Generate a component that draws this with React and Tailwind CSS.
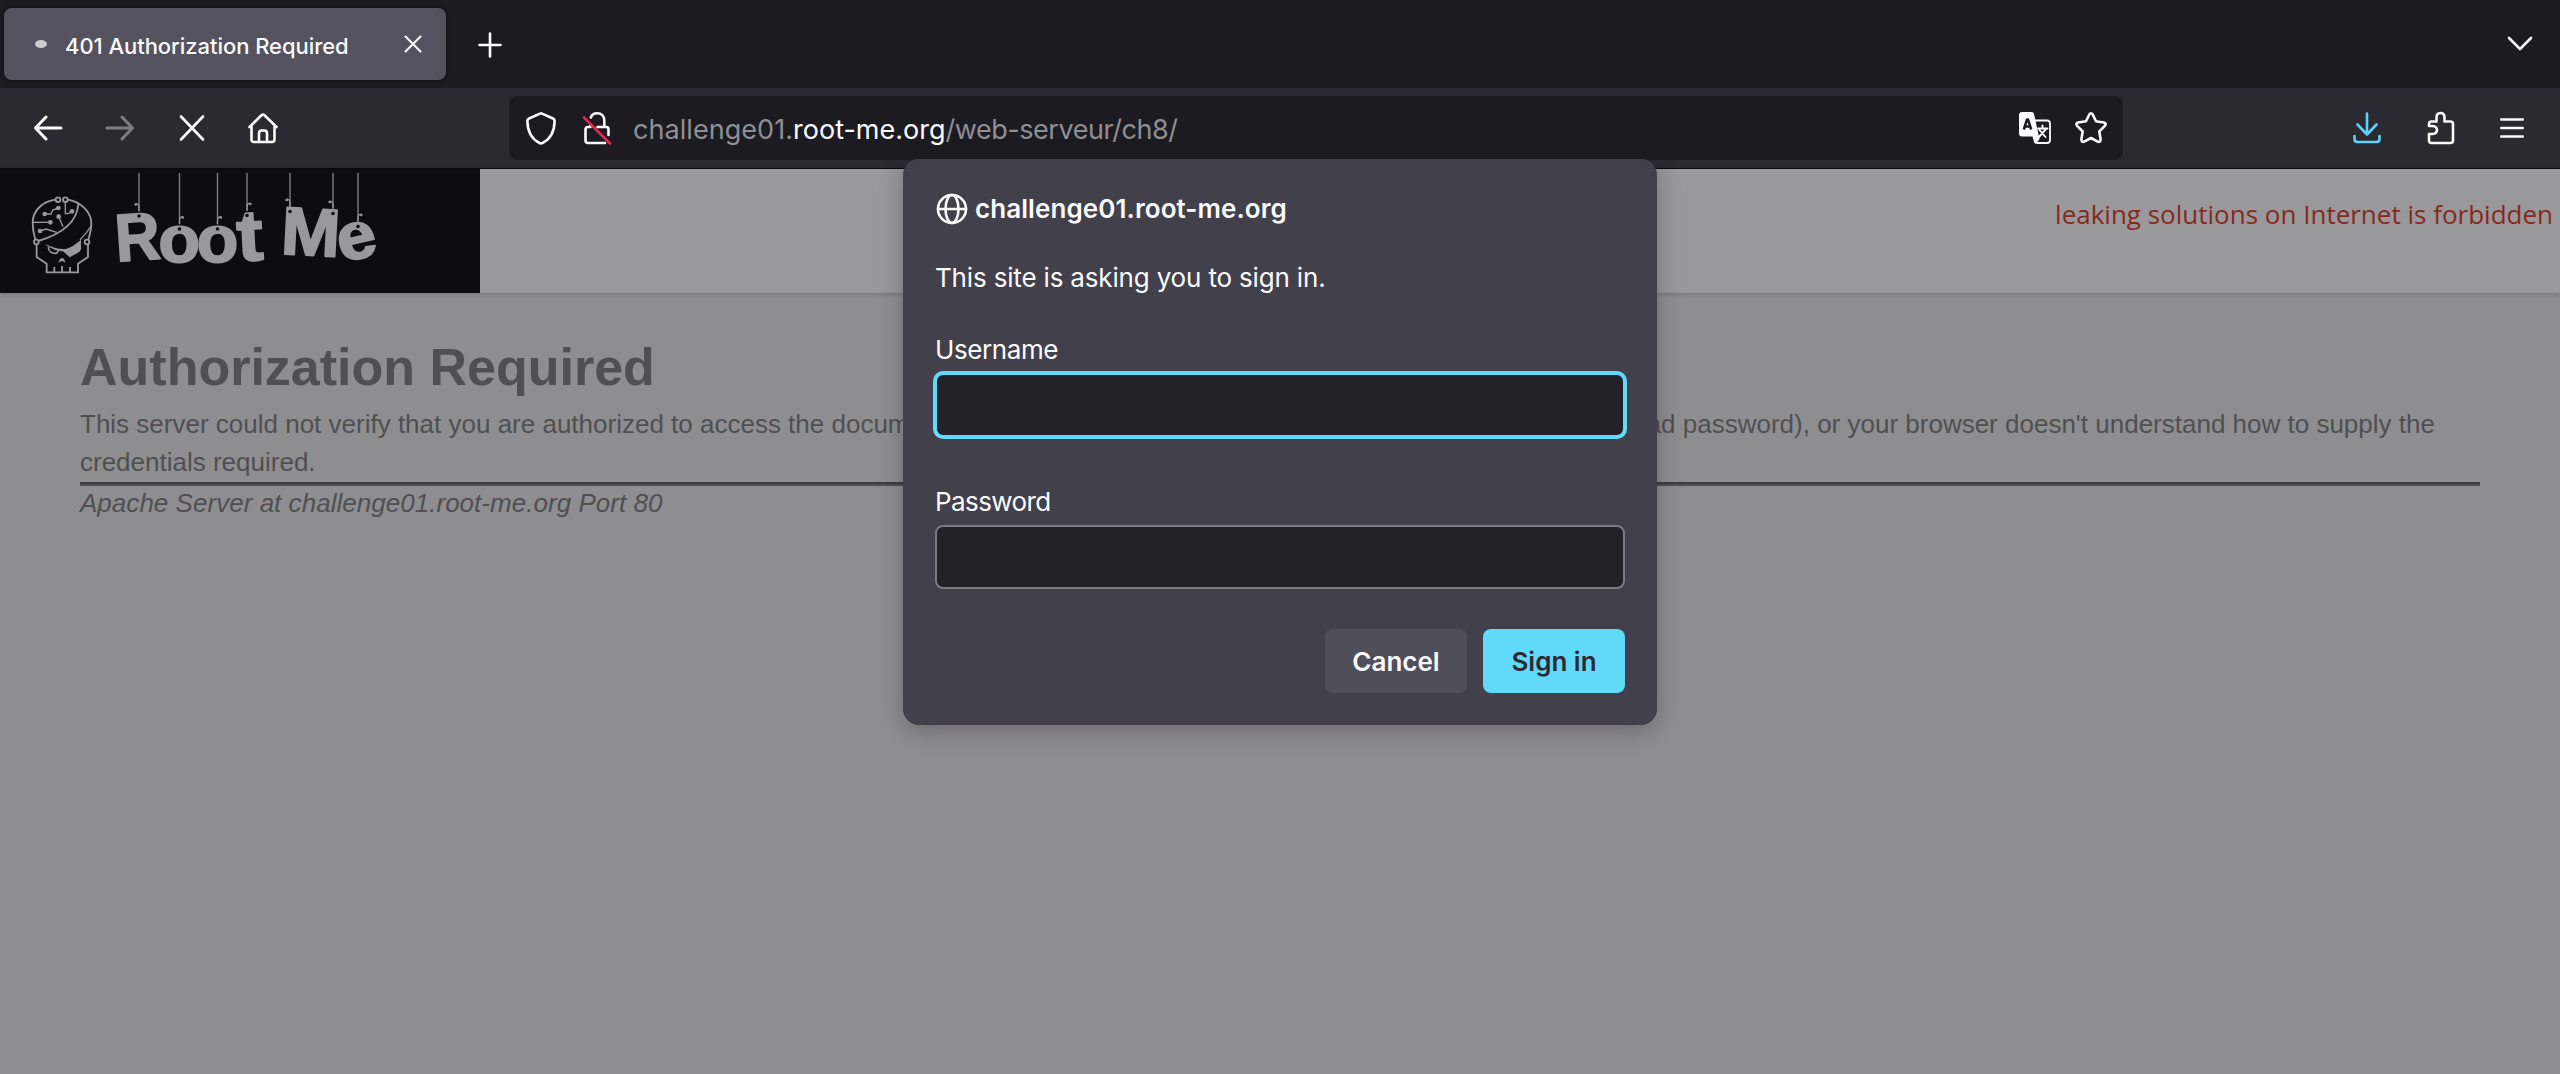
const stroke = {
  fill: "none",
  stroke: "currentColor",
  strokeLinecap: "round",
  strokeLinejoin: "round",
};

function Icon({ w, h, className = "", sw = 2.6, children }) {
  return (
    <svg width={w} height={h} viewBox={`0 0 ${w} ${h}`} className={`shrink-0 ${className}`} {...stroke} strokeWidth={sw}>
      {children}
    </svg>
  );
}

/* Ink boxes of the bold glyphs, in hundredths of an em. */
const INK = {
  R: [6.7, 70.5, 0, 68.8],
  o: [4, 57, -1.2, 54],
  t: [2, 32, -1, 67],
  M: [6.7, 76.6, 0, 68.8],
  e: [4, 51.8, -1.2, 54],
};

/* A hanging letter: centre, size and tilt of the glyph. */
const LETTERS = [
  { ch: "R", cx: 139, cy: 237, w: 39.5, h: 46, rot: -4 },
  { ch: "o", cx: 179.3, cy: 244.5, w: 36, h: 36.5, rot: 0 },
  { ch: "o", cx: 217.5, cy: 244.5, w: 36, h: 36.5, rot: 0 },
  { ch: "t", cx: 250, cy: 236.5, w: 23.5, h: 49, rot: -3 },
  { ch: "M", cx: 311, cy: 232, w: 49.5, h: 46.5, rot: 3 },
  { ch: "e", cx: 357, cy: 241, w: 33.5, h: 36.5, rot: -13 },
];

const STRINGS = [
  { x: 139, y: 216, d: -1 },
  { x: 179.5, y: 229, d: 1 },
  { x: 217.5, y: 229, d: 1 },
  { x: 247, y: 215.5, d: 1 },
  { x: 290, y: 211.5, d: -1 },
  { x: 333, y: 213.5, d: -1 },
  { x: 358, y: 226.5, d: 1 },
];

function Logo() {
  return (
    <svg width="480" height="124" viewBox="0 169 480 124" className="block shrink-0 bg-[#0d0d0f]">
      <g transform="translate(24 190) scale(0.33333)" fill="none" stroke="#99999b" strokeWidth="5.5">
        <path d="M95 29C55 34 27 62 26 97C26 115 29 133 34 149" />
        <path d="M132 29C172 36 201 67 202 99C202 119 197 136 193 149" />
        <circle cx="102" cy="29" r="7" />
        <circle cx="124" cy="29" r="7" />
        <circle cx="37" cy="156" r="7" />
        <circle cx="189" cy="156" r="7" />
        <path d="M163 42C160 86 126 128 43 153" />
        <path d="M201 108C190 128 178 140 168 149" strokeWidth="4" />
        <g strokeWidth="4">
          <path d="M124 36V71H133L144 64" />
          <path d="M103 54L86 60L81 72H62" />
          <path d="M27 97H78" />
          <path d="M104 80L117 110" />
          <path d="M48 123L66 117L98 127" />
        </g>
        <g fill="#99999b" stroke="none">
          <circle cx="103" cy="54" r="7" />
          <circle cx="62" cy="72" r="7" />
          <circle cx="144" cy="64" r="7" />
          <circle cx="79" cy="97" r="7" />
          <circle cx="104" cy="80" r="7" />
          <circle cx="48" cy="123" r="7" />
          <path d="M62 162C85 172 105 178 121 177C139 175 155 163 171 149V178L166 186L137 202L117 184C100 184 80 176 62 162Z" />
          <path d="M104 218C105 210 110 204 114 204C118 204 123 210 124 218L114 212Z" />
        </g>
        <path d="M73 171C73 185 84 192 97 190L104 182" strokeWidth="5" />
        <path d="M38 163V201L68 221V247H162V221L192 201V163" />
        <path d="M91 246V231M114 246V228M138 246V231" />
      </g>
      <g fontFamily="'Liberation Sans', Arial, sans-serif" fontWeight="700" fontSize="100" fill="#99999b" stroke="#99999b" strokeWidth="3" strokeLinejoin="round">
        {LETTERS.map((l, i) => {
          const [x0, x1, y0, y1] = INK[l.ch];
          const sx = l.w / (x1 - x0);
          const sy = l.h / (y1 - y0);
          return (
            <text
              key={i}
              transform={`translate(${l.cx} ${l.cy}) rotate(${l.rot}) scale(${sx} ${sy}) translate(${-(x0 + x1) / 2} ${(y0 + y1) / 2})`}
            >
              {l.ch}
            </text>
          );
        })}
      </g>
      {STRINGS.map((s, i) => (
        <g key={i}>
          <path d={`M${s.x} 173V${s.y - 5}`} stroke="#7d7d80" strokeWidth="1.4" />
          <path
            d={`M${s.x} ${s.y - 5}v-4q0 -3 ${s.d * 3} -3.5`}
            fill="none"
            stroke="#99999b"
            strokeWidth="1.2"
            strokeLinecap="round"
          />
          <circle cx={s.x + s.d * 3.3} cy={s.y - 11.5} r="1.3" fill="#99999b" />
          <circle cx={s.x} cy={s.y} r="1.8" fill="#0d0d0f" />
        </g>
      ))}
    </svg>
  );
}

function TabStrip() {
  return (
    <div className="flex h-[88px] items-start bg-[#1c1b22] pt-2 pl-1 pr-[27px]">
      <div className="flex h-[72px] w-[442px] items-center rounded-lg bg-[#54525e] pl-[31px] shadow-[0_0_6px_rgba(0,0,0,0.5)]">
        <div className="h-2 w-3 rounded-[50%] bg-[#cbcbd0]" />
        <div className="ml-[18px] w-[322px] pt-[3px] text-[22px] leading-7 font-medium tracking-[-0.05px]">
          401 Authorization Required
        </div>
        <Icon w={18} h={18} className="ml-[17px]" sw={2}>
          <path d="M1.500 1.500L16.500 16.500M16.500 1.500L1.500 16.500" />
        </Icon>
      </div>
      <Icon w={24} h={26} className="mt-[24px] ml-[32px]">
        <path d="M12 1.500V24.500M1.500 13H22.500" />
      </Icon>
      <Icon w={26} h={16} className="mt-[28px] ml-auto">
        <path d="M2 2L13 13L24 2" />
      </Icon>
    </div>
  );
}

function Toolbar() {
  return (
    <div className="flex h-[81px] items-center border-b border-[#0c0c0f] bg-[#2b2a33] pr-9">
      <div className="flex w-[509px] items-center pl-[33px]">
        <Icon w={30} h={26} sw={3}>
          <path d="M13 2L2.500 13L13 24M2.500 13H28" />
        </Icon>
        <Icon w={30} h={26} sw={3} className="ml-[42px] text-[#7f7e84]">
          <path d="M17 2L27.500 13L17 24M27.500 13H2" />
        </Icon>
        <Icon w={26} h={26} className="ml-[44px]">
          <path d="M2 1.500L24 24.500M24 1.500L2 24.500" />
        </Icon>
        <Icon w={32} h={32} className="ml-[42px]">
          <path d="M2.500 15L14.500 3.200Q16 1.800 17.500 3.200L29.500 15M4.500 13V27.500Q4.500 30 7 30H25Q27.500 30 27.500 27.500V13M12 30V21.500Q12 18.500 14.500 18.500H17.500Q20 18.500 20 21.500V30" />
        </Icon>
      </div>
      <div className="flex h-16 w-[1614px] items-center rounded-lg bg-[#1c1b22] pl-4 pr-[15px]">
        <Icon w={32} h={34}>
          <path d="M15 2.600Q16 2 17 2.600L28 7.500Q29.800 8.400 29.600 10.500C29.400 19 26.500 27.500 17.500 32Q16 32.700 14.500 32C5.500 27.500 2.600 19 2.400 10.500Q2.200 8.400 4 7.500Z" />
        </Icon>
        <Icon w={30} h={34} className="ml-[25px]">
          <path d="M8.800 6.500C9.800 3.700 12 2.300 15 2.300C19.500 2.300 22.300 5.200 22.300 9.500V16H24.500Q26.500 16 26.500 18.500V24M15.500 16H22M8.500 16V14M7.500 16H6Q3.500 16 3.500 18.500V29.500Q3.500 32 6 32H23" />
          <path d="M2 6.500L28 32.500" stroke="#e22850" />
        </Icon>
        <div className="ml-[21px] flex pt-[3px] text-[27px] leading-8 whitespace-pre text-[#8f8f94]">
          <span className="tracking-[0.05px]">challenge01.</span>
          <span className="text-[#fbfbfe]">root-me.org</span>
          <span className="tracking-[-0.45px]">/web-serveur/ch8/</span>
        </div>
        <Icon w={32} h={32} className="ml-auto">
          <path d="M16 8.500H28Q31 8.500 31 11.500V28Q31 31 28 31H18" strokeWidth="1.800" />
          <path d="M3 0H12.500Q14.500 0 15 2L20.500 27L17 32Q15.500 31.500 15 30L13.500 24.500H3Q0 24.500 0 21.500V3Q0 0 3 0Z" fill="currentColor" stroke="none" />
          <path d="M4.800 17.500L8 7.500H9L12.200 17.500M6 14.500H11" stroke="#1c1b22" strokeWidth="2.500" strokeLinecap="butt" />
          <path d="M19 16.500H28.500M23.500 13.500V16M20.500 18L26.500 25M27 17L19.500 25.500" strokeWidth="1.900" />
        </Icon>
        <Icon w={34} h={34} className="ml-[23px]">
          <path d="M15.300 3.500Q17 0.900 18.700 3.500L22 10.300L29.800 11.500Q33 12.400 30.800 14.900L25.300 20.500L26.600 28.300Q26.700 31.600 23.700 30.600L17 27L10.300 30.600Q7.300 31.600 7.400 28.300L8.700 20.500L3.200 14.900Q1 12.400 4.200 11.500L12 10.300Z" />
        </Icon>
      </div>
      <Icon w={28} h={32} className="ml-auto text-[#5cd5fa]">
        <path d="M14 1.500V22.500M4.500 12.500L14 22.500L23.500 12.500M1.500 24V27Q1.500 30 4.500 30H23.500Q26.500 30 26.500 27V24" />
      </Icon>
      <Icon w={28} h={34} className="ml-[46px]">
        <path d="M9.500 10.500V6.500Q9.500 2 13.500 2Q17.500 2 17.500 6.500V10.500H23.500Q26 10.500 26 13V29.500Q26 32 23.500 32H4.500Q2 32 2 29.500V23H5.500Q10 22.500 10 19Q10 15.500 5.500 15H2V13Q2 10.500 4.500 10.500Z" />
      </Icon>
      <Icon w={24} h={20} className="ml-[45px]">
        <path d="M1.300 1.500H22.700M1.300 10H22.700M1.300 18.500H22.700" />
      </Icon>
    </div>
  );
}

function SignInDialog() {
  return (
    <div className="absolute top-[159px] left-[903px] flex h-[566px] w-[754px] flex-col rounded-2xl bg-[#42404b] px-8 pt-[33px] text-[26px] leading-8 shadow-[0_6px_24px_rgba(30,20,30,0.3)]">
      <div className="flex items-center gap-[7px]">
        <Icon w={32} h={32} className="ml-px">
          <circle cx="16" cy="16" r="14" />
          <ellipse cx="16" cy="16" rx="6.500" ry="14" />
          <path d="M2 16H30" />
        </Icon>
        <span className="pt-px font-semibold tracking-[0.08px]">challenge01.root-me.org</span>
      </div>
      <p className="mt-[37px] tracking-[-0.17px]">This site is asking you to sign in.</p>
      <label className="mt-[40px] tracking-[-0.4px]">Username</label>
      <div className="-mx-0.5 mt-[5px] h-[68px] shrink-0 rounded-[10px] border-4 border-[#61dafa] bg-[#23222b]" />
      <label className="mt-[47px] tracking-[-0.6px]">Password</label>
      <div className="mt-[7px] h-16 shrink-0 rounded-lg border-2 border-[#7b7a81] bg-[#23222b]" />
      <div className="mt-10 flex justify-end gap-4 font-semibold">
        <button className="h-16 w-[142px] rounded-lg bg-[#504e59] pt-0.5">Cancel</button>
        <button className="h-16 w-[142px] rounded-lg bg-[#61dafa] pt-0.5 text-[#2b2a33]">Sign in</button>
      </div>
    </div>
  );
}

export default function App() {
  return (
    <div className="relative flex h-[1074px] w-[2560px] flex-col overflow-hidden bg-[#8e8e90] font-['Inter',sans-serif] text-[#fbfbfe]">
      <TabStrip />
      <Toolbar />
      <header className="flex h-[124px] shrink-0 justify-between bg-[#99999b] shadow-[0_1px_4px_rgba(0,0,0,0.2)]">
        <Logo />
        <p className="pt-[27px] pr-[7px] font-['Open_Sans',sans-serif] text-[26px] leading-9 text-[#862a20]">
          leaking solutions on Internet is forbidden
        </p>
      </header>
      <main className="mt-[44px] px-20 font-['Liberation_Sans',Arial,sans-serif] text-[26px] leading-[38px] text-[#505052]">
        <h1 className="mb-2 text-[52px] leading-[60px] font-bold">Authorization Required</h1>
        <p>
          This server could not verify that you are authorized to access the document requested. Either you supplied the
          wrong credentials (e.g., bad password), or your browser doesn't understand how to supply the credentials
          required.
        </p>
        <hr className="mt-px h-1 border-t-2 border-b-2 border-t-[#3c3c3e] border-b-[#505052]" />
        <address className="leading-[34px] tracking-[0.03px] italic">Apache Server at challenge01.root-me.org Port 80</address>
      </main>
      <SignInDialog />
    </div>
  );
}
